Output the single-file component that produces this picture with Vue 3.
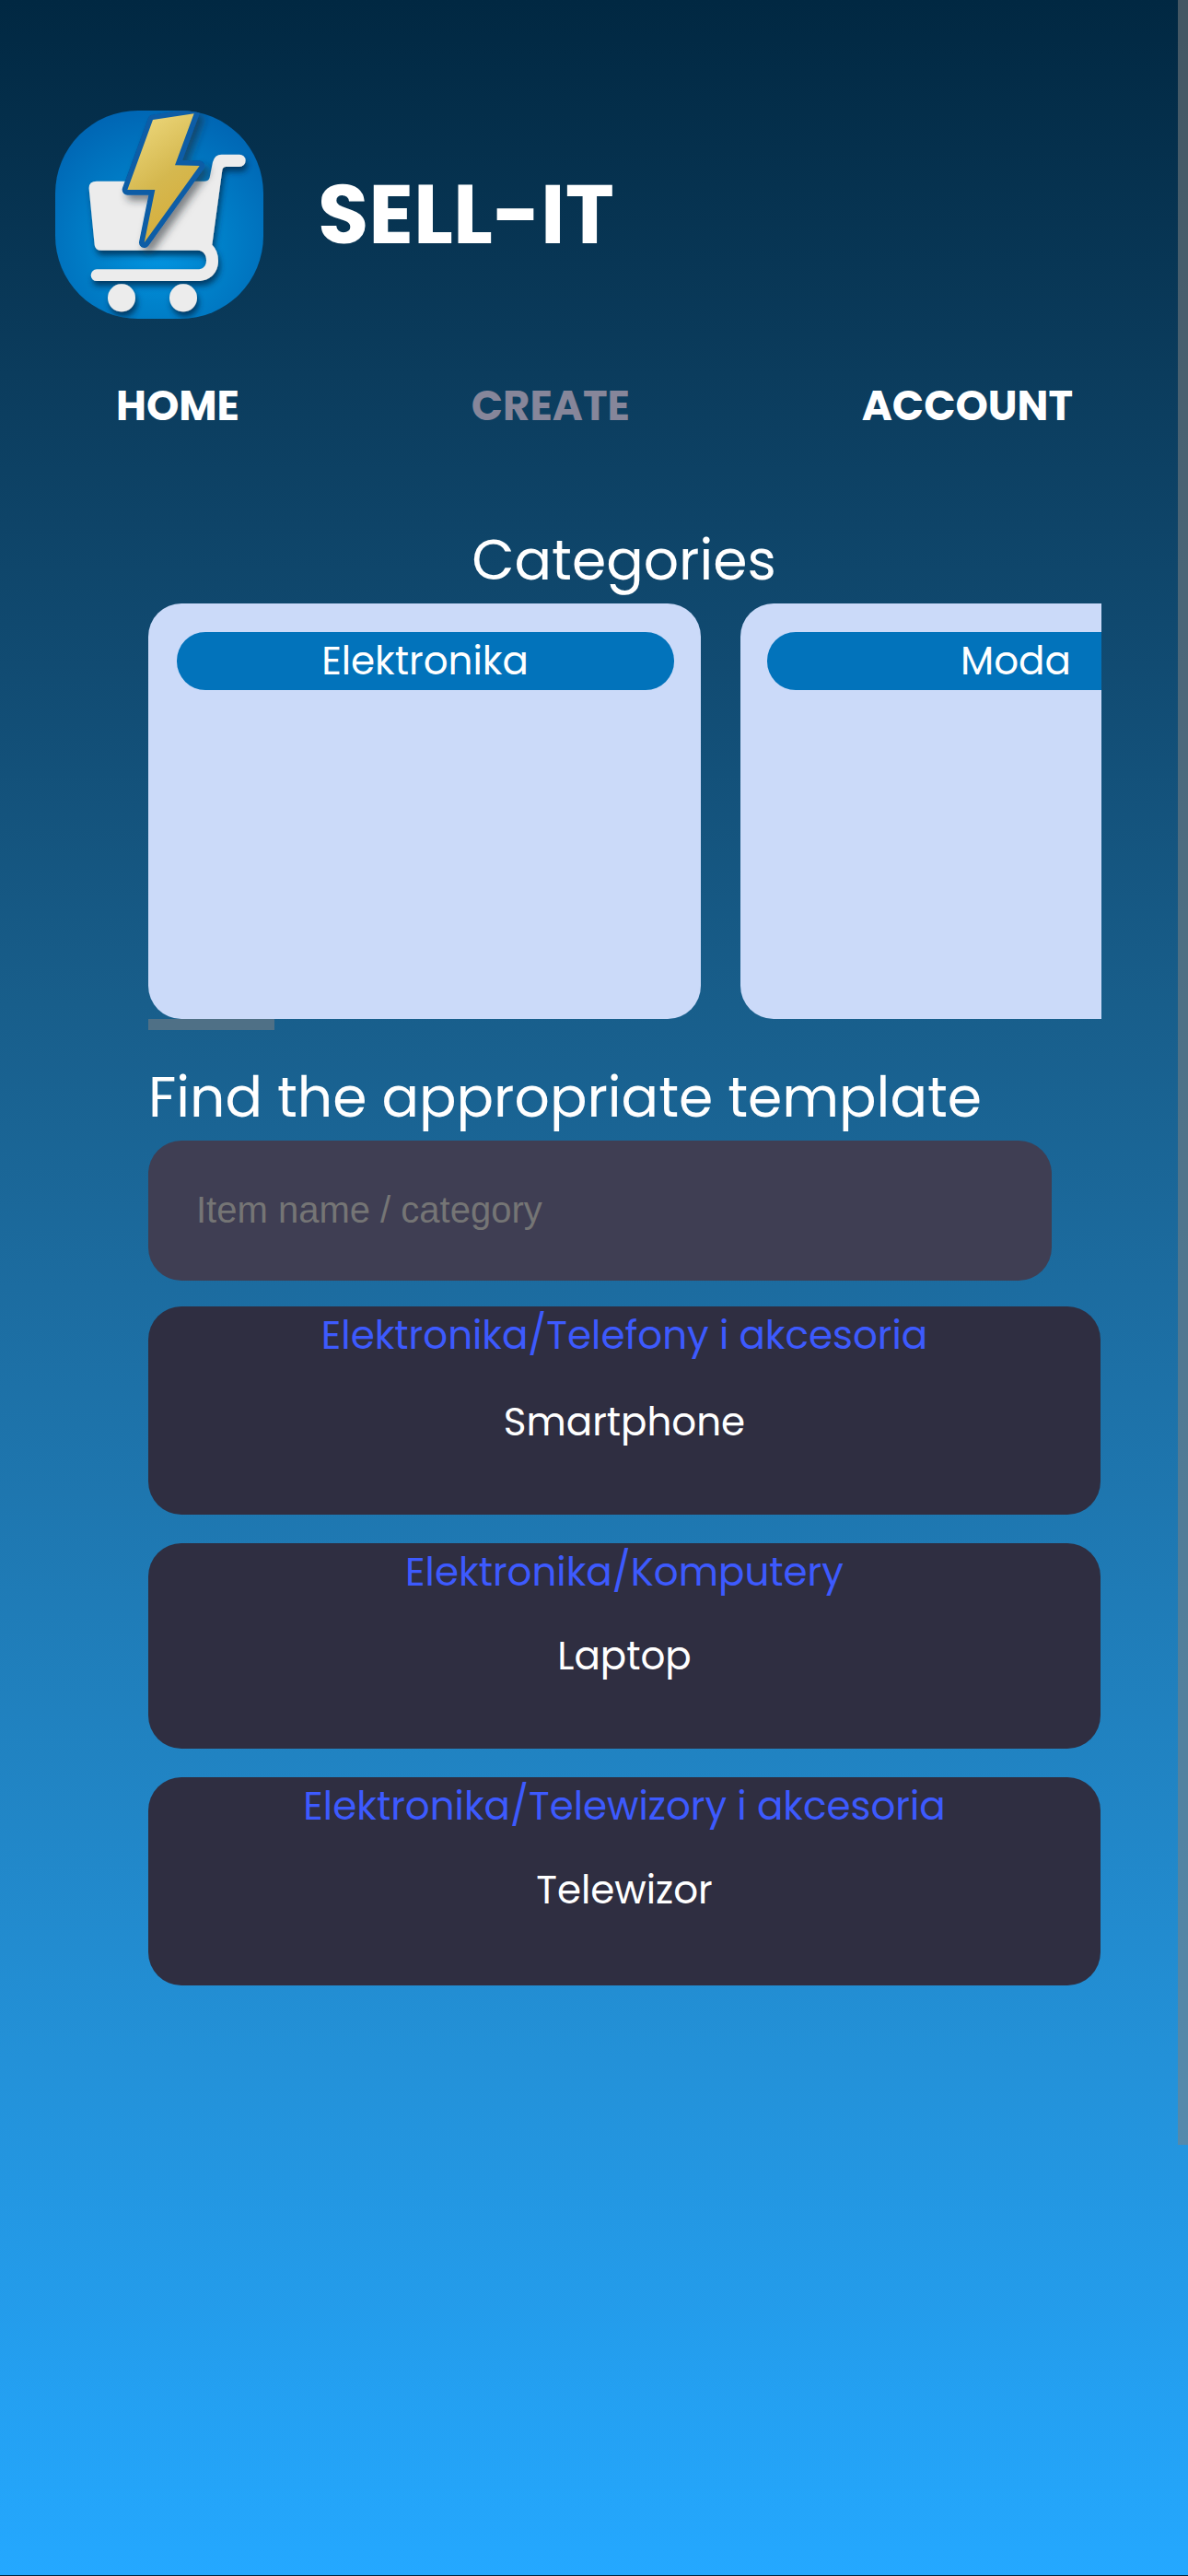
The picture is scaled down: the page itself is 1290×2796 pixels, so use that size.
<script setup>
const nav = [
  { label: 'HOME', key: 'home' },
  { label: 'CREATE', key: 'create', active: true },
  { label: 'ACCOUNT', key: 'account' },
]
const categories = ['Elektronika', 'Moda']
const templates = [
  { path: 'Elektronika/Telefony i akcesoria', name: 'Smartphone' },
  { path: 'Elektronika/Komputery', name: 'Laptop' },
  { path: 'Elektronika/Telewizory i akcesoria', name: 'Telewizor' },
]
</script>

<template>
  <div class="page">
    <header class="brand">
      <svg class="logo" viewBox="60 60 678 678" role="img" aria-label="Sell-It">
        <defs>
          <radialGradient id="bg" gradientUnits="userSpaceOnUse" cx="399" cy="500" r="460">
            <stop offset="0" stop-color="#0297e4" />
            <stop offset="0.45" stop-color="#0080c9" />
            <stop offset="1" stop-color="#0065b3" />
          </radialGradient>
          <linearGradient id="gold" x1="0" y1="0" x2="0.4" y2="1">
            <stop offset="0" stop-color="#f0dc82" />
            <stop offset="0.6" stop-color="#d5b84f" />
            <stop offset="1" stop-color="#d6ae3c" />
          </linearGradient>
          <filter id="shade" x="-20%" y="-20%" width="150%" height="150%">
            <feDropShadow dx="6" dy="16" stdDeviation="9" flood-color="#002c50" flood-opacity="0.8" />
          </filter>
          <filter id="boltShade" x="-30%" y="-20%" width="170%" height="150%">
            <feDropShadow dx="14" dy="18" stdDeviation="12" flood-color="#202a30" flood-opacity="0.55" />
          </filter>
        </defs>
        <rect x="60" y="60" width="678" height="678" fill="url(#bg)" />
        <g fill="#ececec" filter="url(#shade)">
          <path d="M195 290H545Q560 290 563 278L573 228Q579 203 602 203H660A20 20 0 0 1 660 243H616Q606 243 604 254L571 497Q591 516 591 549C591 588 564 615 525 615H195A19 19 0 0 1 195 577H522C542 577 552 566 552 548C552 530 544 516 524 515H210Q190 515 188 497L170 315Q168 290 195 290Z" />
          <circle cx="276" cy="670" r="45" />
          <circle cx="477" cy="670" r="45" />
        </g>
        <path d="M378 90L512 70L450 238L530 240L350 490L385 318L295 318Z" fill="#075da6" stroke="#075da6" stroke-width="34" stroke-linejoin="round" filter="url(#boltShade)" />
        <path d="M378 90L512 70L450 238L530 240L350 490L385 318L295 318Z" fill="url(#gold)" />
      </svg>
      <h1 class="title">SELL-IT</h1>
    </header>

    <nav class="nav">
      <a v-for="n in nav" :key="n.key" :class="['link', n.key, { active: n.active }]">{{ n.label }}</a>
    </nav>

    <main class="content">
      <h2 class="heading centered">Categories</h2>
      <div class="scroller">
        <article v-for="c in categories" :key="c" class="category">
          <div class="pill">{{ c }}</div>
        </article>
      </div>
      <div class="thumb"></div>

      <h2 class="heading find">Find the appropriate template</h2>
      <input class="search" type="text" placeholder="Item name / category" />

      <section class="list">
        <article v-for="t in templates" :key="t.name" class="item">
          <div class="path">{{ t.path }}</div>
          <div class="name">{{ t.name }}</div>
        </article>
      </section>
    </main>
    <div class="page-thumb"></div>
  </div>
</template>

<style>
html, body { margin: 0; background: #00253f; }
</style>

<style scoped>
.page {
  position: relative;
  box-sizing: border-box;
  width: 1290px;
  height: 2795px;
  padding-top: 120px;
  overflow: hidden;
  background: linear-gradient(180deg, #012842 0%, #0b3c5d 14.5%, #124e76 28%, #185e8b 39%, #1c6ca0 50%, #2081bf 66.5%, #2391d8 80%, #24a8ff 100%);
  color: #fff;
  font-family: Poppins, Inter, sans-serif;
}
.brand { display: flex; align-items: center; height: 226px; padding-left: 60px; }
.logo { width: 226px; height: 226px; border-radius: 90px; flex: none; }
.title { margin: 0 0 0 59px; font-size: 90px; line-height: 120px; font-weight: 700; }
.nav { display: flex; justify-content: space-between; padding: 65px 125px 0 126px; }
.link { font-size: 45px; line-height: 60px; font-weight: 700; }
.active { color: #86869a; }
.content { width: 1035px; margin: 92px 0 0 161px; }
.heading { margin: 0; font-size: 60px; line-height: 90px; font-weight: 400; }
.centered { width: 1033px; text-align: center; }
.scroller { display: flex; gap: 43px; margin-top: 2px; overflow: hidden; }
.category {
  box-sizing: border-box;
  flex: none;
  width: 600px;
  height: 451px;
  padding: 31px 29px 0 31px;
  border-radius: 36px;
  background: #cbdaf9;
}
.category + .category { padding: 31px 30px 0 29px; }
.pill {
  box-sizing: border-box;
  height: 63px;
  padding-right: 1px;
  border-radius: 31px;
  background: #0273bb;
  font-size: 42px;
  line-height: 64px;
  text-align: center;
}
.thumb { width: 137px; height: 12px; background: rgba(128, 128, 128, 0.53); }
.find { margin-top: 28px; }
.search {
  display: block;
  box-sizing: border-box;
  width: 981px;
  height: 152px;
  margin-top: 2px;
  padding: 0 52px 2px;
  border: 0;
  border-radius: 36px;
  outline: 0;
  background: #3f3e53;
  color: #fff;
  font: 40px "Liberation Sans", Arial, sans-serif;
}
.search::placeholder { color: #757575; opacity: 1; }
.list { display: flex; flex-direction: column; gap: 31px; width: 1034px; margin-top: 28px; }
.item {
  height: 226px;
  border-radius: 36px;
  background: #2f2e41;
  font-size: 42px;
  line-height: 64px;
  text-align: center;
}
.item:nth-child(2) { height: 223px; }
.path { color: #3d5afe; }
.name { margin-top: 27px; }
.item:first-child .name { margin-top: 30px; }
.page-thumb { position: absolute; top: 0; right: 0; width: 11px; height: 2328px; background: rgba(128, 128, 128, 0.53); }
</style>
